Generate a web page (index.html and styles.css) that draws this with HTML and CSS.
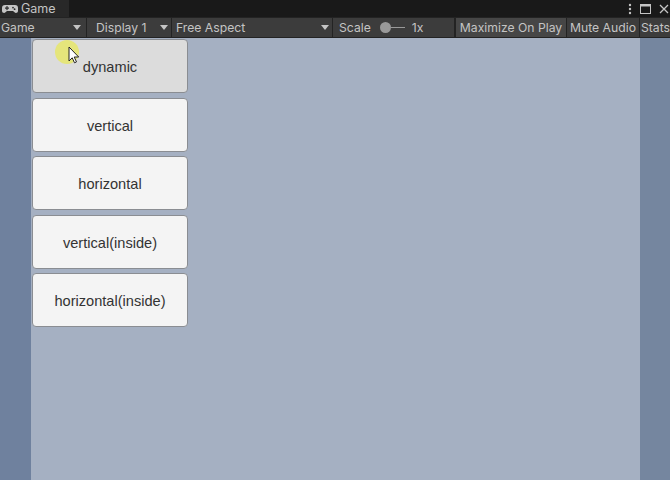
FILE: index.html
```html
<!DOCTYPE html>
<html>
<head>
<meta charset="utf-8">
<link rel="stylesheet" href="styles.css">
</head>
<body>
<div class="window">
  <div class="tabbar">
    <div class="tab">
      <svg class="pad" width="16" height="10" viewBox="0 0 16 10"><path d="M3 1h10a3 3 0 0 1 3 3v3a2 2 0 0 1-3.5 1.3L11 7H5L3.5 8.3A2 2 0 0 1 0 7V4a3 3 0 0 1 3-3z" fill="#c4c4c4"/><rect x="3" y="3.5" width="4" height="1.2" fill="#282828"/><rect x="4.4" y="2.1" width="1.2" height="4" fill="#282828"/><circle cx="11" cy="3.6" r="0.9" fill="#282828"/><circle cx="12.6" cy="5.2" r="0.9" fill="#282828"/></svg>
      <span>Game</span>
    </div>
    <div class="tabspace"></div>
    <div class="winicons">
      <svg width="4" height="12" viewBox="0 0 4 12"><circle cx="2" cy="2" r="1.2" fill="#c4c4c4"/><circle cx="2" cy="6" r="1.2" fill="#c4c4c4"/><circle cx="2" cy="10" r="1.2" fill="#c4c4c4"/></svg>
      <svg width="11" height="10" viewBox="0 0 11 10"><rect x="0.5" y="0.5" width="10" height="9" fill="none" stroke="#c4c4c4"/><rect x="0.5" y="0.5" width="10" height="2" fill="#c4c4c4"/></svg>
      <svg width="10" height="10" viewBox="0 0 10 10"><path d="M1 1L9 9M9 1L1 9" stroke="#c4c4c4" stroke-width="1.3"/></svg>
    </div>
  </div>
  <div class="toolbar">
    <div class="dd dd-game"><span>Game</span><i class="arrow"></i></div>
    <div class="dd dd-display"><span>Display 1</span><i class="arrow"></i></div>
    <div class="dd dd-aspect"><span>Free Aspect</span><i class="arrow"></i></div>
    <div class="scale">
      <span>Scale</span>
      <span class="slider"><i class="knob"></i><i class="track"></i></span>
      <span>1x</span>
    </div>
    <div class="tspacer"></div>
    <div class="tbtn on">Maximize On Play</div>
    <div class="tbtn mute">Mute Audio</div>
    <div class="tbtn last">Stats</div>
  </div>
  <div class="view">
    <div class="side"></div>
    <div class="game">
      <div class="menu">
        <button class="btn hover">dynamic</button>
        <button class="btn">vertical</button>
        <button class="btn">horizontal</button>
        <button class="btn">vertical(inside)</button>
        <button class="btn">horizontal(inside)</button>
      </div>
    </div>
    <div class="side right"></div>
  </div>
  <div class="cursor">
    <svg width="40" height="40" viewBox="0 0 40 40"><circle cx="14" cy="14" r="12" fill="#e6e66a" opacity="0.85"/><path d="M16 9v14l3.2-3.2 2.3 5 2-0.9-2.3-4.9h4.5z" fill="#fff" stroke="#222" stroke-width="1"/></svg>
  </div>
</div>
</body>
</html>
```

FILE: styles.css
```css
* { box-sizing: border-box; }
html, body { margin: 0; padding: 0; }
body {
  width: 670px;
  height: 480px;
  overflow: hidden;
  background: #191919;
  font-family: "Inter", "Noto Sans", "Liberation Sans", sans-serif;
}
.window { position: relative; width: 670px; height: 480px; display: flex; flex-direction: column; }
.tabbar { height: 17px; display: flex; background: #191919; }
.tab {
  width: 69px; height: 17px; background: #282828;
  display: flex; align-items: center; gap: 3px; padding-left: 2px;
  color: #c4c4c4; font-size: 12.5px;
}
.pad { display: block; }
.tabspace { flex: 1; }
.winicons { display: flex; align-items: center; gap: 8px; padding-right: 1px; }
.toolbar {
  height: 21px; background: #3c3c3c;
  border-top: 1px solid #232323;
  border-bottom: 1px solid #232323;
  display: flex; align-items: stretch;
  color: #c4c4c4; font-size: 12.2px;
  white-space: nowrap; overflow: hidden;
}
.toolbar > div { flex-shrink: 0; }
.toolbar > .tspacer { flex: 1 1 auto; flex-shrink: 1; }
.dd { display: flex; align-items: center; justify-content: space-between; border-right: 1px solid #232323; }
.dd-game { width: 87px; padding: 0 5px 0 1px; }
.dd-display { width: 85px; padding: 0 3px 0 9px; }
.dd-aspect { width: 161px; padding: 0 3px 0 4px; }
.arrow { width: 0; height: 0; border-left: 4px solid transparent; border-right: 4px solid transparent; border-top: 5px solid #c4c4c4; }
.scale { display: flex; align-items: center; padding-left: 6px; width: 122px; border-right: 1px solid #232323; }
.slider { display: flex; align-items: center; margin: 0 7px 0 9px; }
.knob { width: 11px; height: 11px; border-radius: 50%; background: #999; }
.track { width: 14px; height: 1px; background: #999; }
.tbtn { display: flex; align-items: center; padding: 0 3px; border-left: 1px solid #232323; background: #3c3c3c; }
.tbtn.on { background: #464646; width: 111px; justify-content: center; }
.tbtn.mute { width: 73px; }
.tbtn.last { width: 31px; padding-left: 1px; padding-right: 0; }
.view { flex: 1; display: flex; }
.side { width: 31px; background: #6f819e; }
.side.right { width: 30px; background: #75869f; }
.game { flex: 1; background: #a5b0c2; padding: 1px 0 0 1px; }
.menu { display: flex; flex-direction: column; gap: 4.6px; width: 156px; }
.btn {
  height: 54px; background: #f4f4f4; border: 1px solid #8a8d92; border-radius: 4px;
  font-family: "Liberation Sans", Arial, sans-serif; font-size: 14.6px; color: #333;
  padding: 2px 0 0 0; margin: 0;
}
.btn.hover { background: #dcdcdc; }
.cursor { position: absolute; left: 53px; top: 38px; pointer-events: none; }
```
